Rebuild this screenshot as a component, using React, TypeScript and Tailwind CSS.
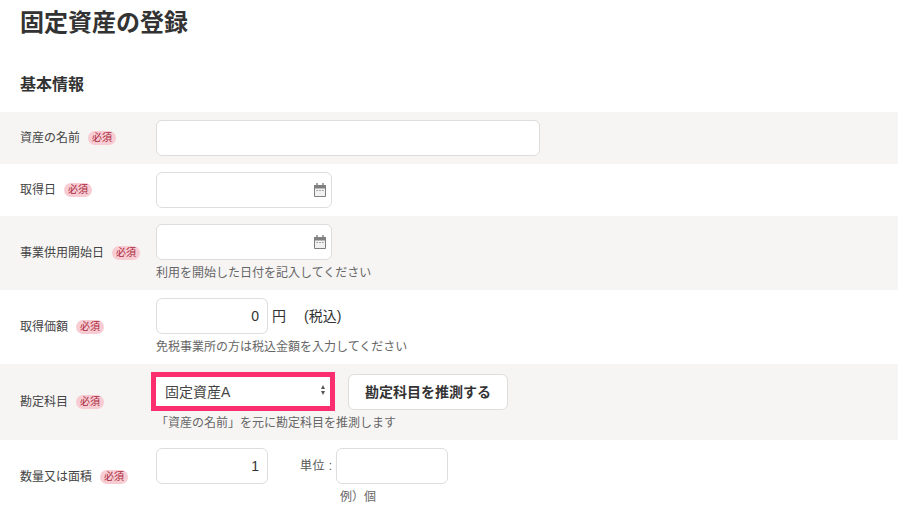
import React from 'react';

const inputClass =
  'h-9 rounded-md border border-[#dddddd] bg-white px-2 text-sm text-[#333333] outline-none';

// 必須バッジ
const Required = () => (
  <span className="ml-2 inline-flex h-[14px] w-7 shrink-0 items-center justify-center rounded-full bg-[#f8ccd3] text-[10px] leading-none text-[#a8283c]">
    必須
  </span>
);

const Row = ({
  label,
  gray = false,
  className = '',
  children,
}: {
  label: string;
  gray?: boolean;
  className?: string;
  children: React.ReactNode;
}) => (
  <div className={`flex px-5 py-2 ${gray ? 'bg-[#f6f5f4]' : 'bg-white'} ${className}`}>
    <div className="flex w-[136px] shrink-0 items-center text-xs text-[#444444]">
      <span>{label}</span>
      <Required />
    </div>
    <div className="min-w-0 flex-1">{children}</div>
  </div>
);

const Help = ({ className = '', children }: { className?: string; children: React.ReactNode }) => (
  <p className={`text-xs leading-[18px] text-[#666666] ${className}`}>{children}</p>
);

const CalendarIcon = () => (
  <svg viewBox="0 0 12 14" className="absolute right-[6px] top-[11px] h-[14px] w-3" fill="none">
    <path d="M.5 2.5h11v11H.5z" fill="#f1f1f1" stroke="#808080" strokeWidth="1" />
    <path d="M0 2h12v3.5H0z" fill="#808080" />
    <path d="M3 0v3M9 0v3" stroke="#808080" strokeWidth="1.4" />
    <path d="M2.5 7.5h1.4M5.3 7.5h1.4M8.1 7.5h1.4" stroke="#8a8a8a" strokeWidth="1" />
  </svg>
);

const DateInput = () => (
  <div className="relative h-9 w-[176px]">
    <input type="text" className={`${inputClass} w-full`} />
    <CalendarIcon />
  </div>
);

const App = () => {
  return (
    <div
      className="h-[508px] w-[898px] overflow-hidden bg-white text-[#333333]"
      style={{ fontFamily: '"Liberation Sans", "Noto Sans CJK JP", sans-serif' }}
    >
      <h1 className="px-5 pt-[5px] text-2xl font-bold leading-9 text-[#333333]">固定資産の登録</h1>
      <h2 className="mt-8 px-5 text-base font-bold leading-6 text-[#333333]">基本情報</h2>
      <div className="mt-[15px]">
        <Row label="資産の名前" gray>
          <input type="text" className={`${inputClass} block w-[384px]`} />
        </Row>
        <Row label="取得日">
          <DateInput />
        </Row>
        <Row label="事業供用開始日" gray className="h-[74px]">
          <DateInput />
          <Help className="mt-1">利用を開始した日付を記入してください</Help>
        </Row>
        <Row label="取得価額" className="h-[74px]">
          <div className="flex items-center">
            <input
              type="text"
              defaultValue="0"
              className={`${inputClass} w-28 text-right`}
            />
            <span className="ml-1 text-sm">円</span>
            <span className="ml-[18px] text-sm">(税込)</span>
          </div>
          <Help className="mt-1">免税事業所の方は税込金額を入力してください</Help>
        </Row>
        <Row label="勘定科目" gray className="h-[76px]">
          <div className="flex items-center">
            <div className="relative -ml-[5px] h-[39px] w-[184px] border-[5px] border-[#fb2f70] bg-white">
              <select
                defaultValue="a"
                className="h-full w-full appearance-none bg-white pl-[9px] text-sm text-[#444444] outline-none"
              >
                <option value="a">固定資産A</option>
              </select>
              <svg viewBox="0 0 4 10" className="absolute right-[5px] top-[8px] h-[10px] w-1">
                <path d="M2 0l2 4H0zM2 10L0 6h4z" fill="#555555" />
              </svg>
            </div>
            <button
              type="button"
              className="ml-[13px] h-9 w-40 rounded-md border border-[#dddddd] bg-white text-sm font-bold text-[#333333]"
            >
              勘定科目を推測する
            </button>
          </div>
          <Help className="mt-[3px]">「資産の名前」を元に勘定科目を推測します</Help>
        </Row>
        <Row label="数量又は面積" className="h-[74px]">
          <div className="flex">
            <input
              type="text"
              defaultValue="1"
              className={`${inputClass} w-28 text-right`}
            />
            <div className="ml-8">
              <div className="flex items-center">
                <span className="w-9 text-xs tracking-[0.5px] text-[#555555]">単位 :</span>
                <input type="text" className={`${inputClass} w-28`} />
              </div>
              <p className="ml-10 mt-1 text-xs leading-[18px] text-[#666666]">例）個</p>
            </div>
          </div>
        </Row>
      </div>
    </div>
  );
};

export default App;
